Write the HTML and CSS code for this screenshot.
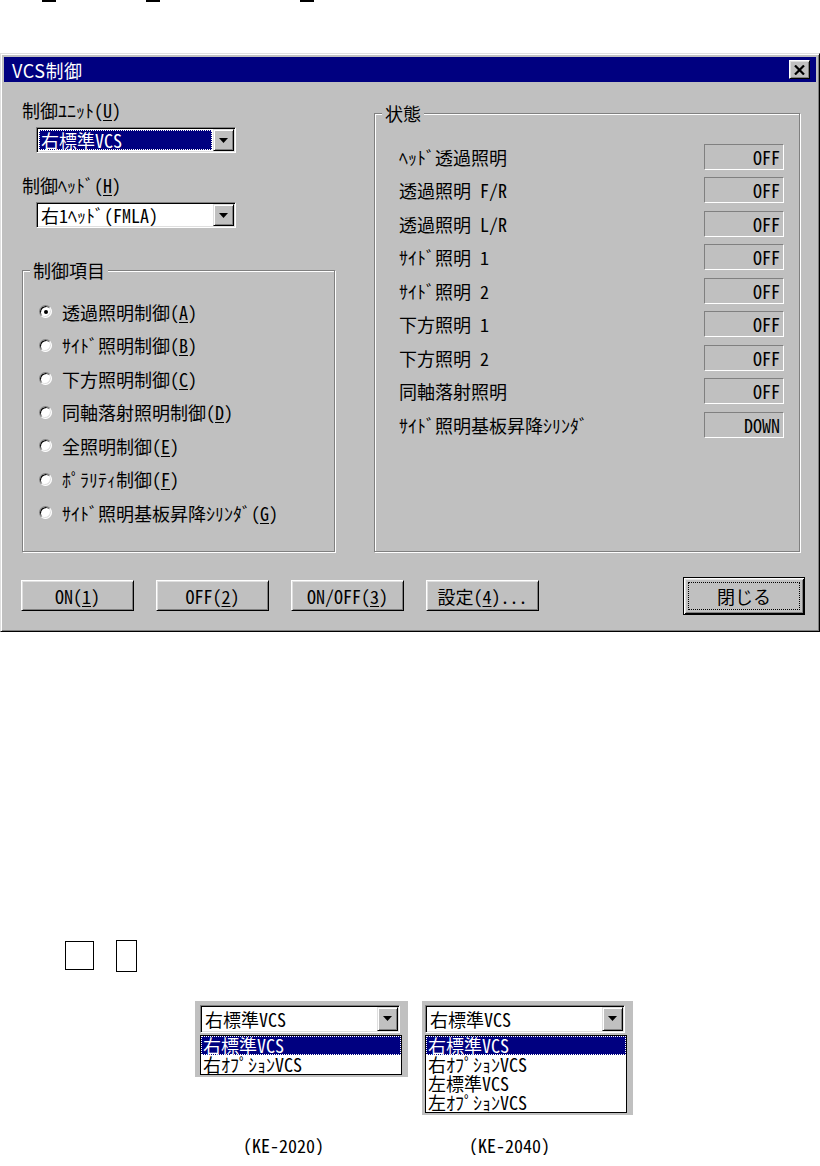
FILE: index.html
```html
<!DOCTYPE html>
<html lang="ja">
<head>
  <meta charset="UTF-8">
  <title>VCS制御</title>
  <link rel="stylesheet" href="styles.css">
</head>
<body>
  <div class="cutoff">
    <i class="mark"></i>
    <i class="mark mark-2"></i>
    <i class="mark mark-3"></i>
  </div>

  <div class="dialog">
    <div class="titlebar">
      <span class="title">VCS制御</span>
      <button class="close" title="閉じる">
        <svg width="11" height="10" viewBox="0 0 11 10"><path d="M1 0.5l9 9M10 0.5l-9 9" stroke="#000" stroke-width="2.2"/></svg>
      </button>
    </div>

    <div class="dlg-main">
      <div class="left-col">
        <label class="lbl">制御ﾕﾆｯﾄ(<u>U</u>)</label>
        <div class="combo">
          <span class="combo-text"><span class="sel">右標準VCS</span></span>
          <span class="drop"><svg width="9" height="5" viewBox="0 0 9 5"><path d="M0 0h9L4.5 5z"/></svg></span>
        </div>

        <label class="lbl">制御ﾍｯﾄﾞ(<u>H</u>)</label>
        <div class="combo">
          <span class="combo-text">右1ﾍｯﾄﾞ(FMLA)</span>
          <span class="drop"><svg width="9" height="5" viewBox="0 0 9 5"><path d="M0 0h9L4.5 5z"/></svg></span>
        </div>

        <fieldset class="group items">
          <legend>制御項目</legend>
          <div class="group-body">
            <div class="radio-row"><span class="radio checked"></span>透過照明制御(<u>A</u>)</div>
            <div class="radio-row"><span class="radio"></span>ｻｲﾄﾞ照明制御(<u>B</u>)</div>
            <div class="radio-row"><span class="radio"></span>下方照明制御(<u>C</u>)</div>
            <div class="radio-row"><span class="radio"></span>同軸落射照明制御(<u>D</u>)</div>
            <div class="radio-row"><span class="radio"></span>全照明制御(<u>E</u>)</div>
            <div class="radio-row"><span class="radio"></span>ﾎﾟﾗﾘﾃｨ制御(<u>F</u>)</div>
            <div class="radio-row"><span class="radio"></span>ｻｲﾄﾞ照明基板昇降ｼﾘﾝﾀﾞ(<u>G</u>)</div>
          </div>
        </fieldset>
      </div>

      <fieldset class="group status">
        <legend>状態</legend>
        <div class="group-body">
          <div class="stat-row"><span>ﾍｯﾄﾞ透過照明</span><span class="val">OFF</span></div>
          <div class="stat-row"><span>透過照明 F/R</span><span class="val">OFF</span></div>
          <div class="stat-row"><span>透過照明 L/R</span><span class="val">OFF</span></div>
          <div class="stat-row"><span>ｻｲﾄﾞ照明 1</span><span class="val">OFF</span></div>
          <div class="stat-row"><span>ｻｲﾄﾞ照明 2</span><span class="val">OFF</span></div>
          <div class="stat-row"><span>下方照明 1</span><span class="val">OFF</span></div>
          <div class="stat-row"><span>下方照明 2</span><span class="val">OFF</span></div>
          <div class="stat-row"><span>同軸落射照明</span><span class="val">OFF</span></div>
          <div class="stat-row"><span>ｻｲﾄﾞ照明基板昇降ｼﾘﾝﾀﾞ</span><span class="val">DOWN</span></div>
        </div>
      </fieldset>
    </div>

    <div class="btn-row">
      <button class="btn">ON(<u>1</u>)</button>
      <button class="btn">OFF(<u>2</u>)</button>
      <button class="btn">ON/OFF(<u>3</u>)</button>
      <button class="btn">設定(<u>4</u>)...</button>
      <button class="btn btn-default"><span class="focus">閉じる</span></button>
    </div>
  </div>

  <div class="boxes">
    <span class="box box-a"></span>
    <span class="box box-b"></span>
  </div>

  <div class="samples">
    <div class="panel panel-2020">
      <div class="combo combo-sample">
        <span class="combo-text">右標準VCS</span>
        <span class="drop"><svg width="9" height="5" viewBox="0 0 9 5"><path d="M0 0h9L4.5 5z"/></svg></span>
      </div>
      <ul class="list">
        <li class="on">右標準VCS</li>
        <li>右ｵﾌﾟｼｮﾝVCS</li>
      </ul>
    </div>
    <div class="panel panel-2040">
      <div class="combo combo-sample">
        <span class="combo-text">右標準VCS</span>
        <span class="drop"><svg width="9" height="5" viewBox="0 0 9 5"><path d="M0 0h9L4.5 5z"/></svg></span>
      </div>
      <ul class="list">
        <li class="on">右標準VCS</li>
        <li>右ｵﾌﾟｼｮﾝVCS</li>
        <li>左標準VCS</li>
        <li>左ｵﾌﾟｼｮﾝVCS</li>
      </ul>
    </div>
    <div class="caption cap-2020">(KE-2020)</div>
    <div class="caption cap-2040">(KE-2040)</div>
  </div>
</body>
</html>
```

FILE: styles.css
```css
body {
  margin: 0;
  width: 820px;
  background: #fff;
  color: #000;
  font-family: "Noto Sans CJK JP", sans-serif;
  font-size: 18px;
  line-height: 20px;
  font-feature-settings: "hwid" 1;
}
u {
  text-decoration-thickness: 1px;
  text-underline-offset: 2px;
}

/* cut off text line above the dialog */
.cutoff {
  display: flex;
  height: 2px;
  padding-left: 42px;
}
.mark {
  width: 14px;
  height: 2px;
  background: #000;
}
.mark-2 {
  margin-left: 90px;
}
.mark-3 {
  margin-left: 140px;
}

/* window */
.dialog {
  margin-top: 51px;
  width: 820px;
  box-sizing: border-box;
  padding: 3px;
  background: #c0c0c0;
  border: 1px solid;
  border-color: #dfdfdf #000 #000 #dfdfdf;
  box-shadow: inset 1px 1px #fff, inset -1px -1px #808080;
}
.titlebar {
  display: flex;
  align-items: center;
  justify-content: space-between;
  height: 25px;
  padding: 0 6px 0 8px;
  background: #000080;
  color: #fff;
}
.title {
  font-feature-settings: normal;
  letter-spacing: 0.5px;
}
.close {
  display: flex;
  align-items: center;
  justify-content: center;
  width: 21px;
  height: 19px;
  padding: 0;
  background: #c0c0c0;
  border: 1px solid;
  border-color: #fff #000 #000 #fff;
  box-shadow: inset 1px 1px #dfdfdf, inset -1px -1px #808080;
}

.dlg-main {
  display: flex;
  padding: 18px 0 0 18px;
}
.left-col {
  width: 313px;
}
.lbl {
  display: block;
  height: 20px;
}

/* combo box */
.combo {
  display: flex;
  box-sizing: border-box;
  width: 200px;
  height: 26px;
  margin: 7px 0 22px 14px;
  background: #fff;
  border: 1px solid;
  border-color: #808080 #fff #fff #808080;
  box-shadow: inset 1px 1px #000, inset -1px -1px #dfdfdf;
  padding: 1px;
}
.combo-text {
  flex: 1;
  display: flex;
  align-items: center;
  padding: 1px 1px 1px 3px;
  line-height: 20px;
  white-space: nowrap;
}
.combo .sel {
  flex: 1;
  margin-left: -2px;
  padding-left: 1px;
  background: #000080;
  color: #fff;
  border: 1px dotted #fff;
  line-height: 18px;
}
.drop {
  display: flex;
  align-items: center;
  justify-content: center;
  box-sizing: border-box;
  width: 21px;
  background: #c0c0c0;
  border: 1px solid;
  border-color: #dfdfdf #000 #000 #dfdfdf;
  box-shadow: inset 1px 1px #fff, inset -1px -1px #808080;
}

/* group boxes */
.group {
  margin: 0;
  padding: 0;
  min-width: 0;
  border: 1px solid #808080;
  box-shadow: inset 1px 1px #fff, 1px 1px #fff;
}
.group legend {
  margin-left: 7px;
  padding: 0 3px;
  background: #c0c0c0;
  line-height: 20px;
}
.items {
  margin-top: 32px;
}
.items .group-body {
  padding: 15px 0 21px 16px;
}
.radio-row {
  display: flex;
  align-items: center;
  height: 33.5px;
  white-space: nowrap;
}
.radio {
  display: flex;
  align-items: center;
  justify-content: center;
  box-sizing: border-box;
  width: 13px;
  height: 13px;
  margin-right: 10px;
  border-radius: 50%;
  background: #fff;
  border: 1px solid;
  border-color: #808080 #fff #fff #808080;
  box-shadow: inset 1px 1px #000, inset -1px -1px #dfdfdf;
}
.radio.checked::after {
  content: "";
  width: 4px;
  height: 4px;
  border-radius: 50%;
  background: #000;
}

.status {
  width: 426px;
  box-sizing: border-box;
  margin-left: 39px;
  margin-top: 3px;
}
.status .group-body {
  padding: 17px 15px 0 24px;
}
.stat-row {
  display: flex;
  align-items: center;
  justify-content: space-between;
  height: 33.5px;
  white-space: nowrap;
}
.val {
  box-sizing: border-box;
  width: 80px;
  height: 26px;
  padding-right: 3px;
  text-align: right;
  line-height: 24px;
  border: 1px solid;
  border-color: #808080 #fff #fff #808080;
}

/* buttons */
.btn-row {
  display: flex;
  align-items: center;
  gap: 22px;
  margin: 25px 0 13px;
  padding: 0 11px 0 17px;
}
.btn {
  box-sizing: border-box;
  width: 113px;
  height: 31px;
  padding: 0;
  background: #c0c0c0;
  color: #000;
  font: inherit;
  font-feature-settings: inherit;
  border: 1px solid;
  border-color: #fff #000 #000 #fff;
  box-shadow: inset 1px 1px #dfdfdf, inset -1px -1px #808080;
}
.btn-default {
  display: flex;
  width: 122px;
  height: 38px;
  margin-left: auto;
  padding: 4px;
  border-color: #000;
  box-shadow: inset 1px 1px #fff, inset -1px -1px #000, inset 2px 2px #dfdfdf, inset -2px -2px #808080;
  font-feature-settings: normal;
}
.focus {
  flex: 1;
  display: flex;
  align-items: center;
  justify-content: center;
  border: 1px dotted #000;
}

/* figure below the dialog */
.boxes {
  display: flex;
  align-items: center;
  height: 32px;
  margin-top: 308px;
  padding-left: 65px;
}
.box {
  box-sizing: border-box;
  border: 1px solid #000;
}
.box-a {
  width: 29px;
  height: 29px;
}
.box-b {
  width: 21px;
  height: 32px;
  margin-left: 22px;
}

.samples {
  display: grid;
  grid-template-columns: 213px 211px;
  column-gap: 14px;
  row-gap: 20px;
  align-items: start;
  margin-top: 29px;
  padding-left: 195px;
}
.panel {
  background: #c0c0c0;
  padding: 4px 6px 2px 5px;
}
.panel-2040 {
  padding-left: 3px;
}
.combo-sample {
  margin: 0;
  height: 28px;
}
.list {
  list-style: none;
  margin: 2px 0 0;
  padding: 0;
  background: #fff;
  border: 1px solid #000;
}
.list li {
  height: 19px;
  line-height: 19px;
  padding-left: 2px;
  white-space: nowrap;
}
.list li.on {
  background: #000080;
  color: #fff;
  outline: 1px dotted #fff;
  outline-offset: -1px;
}
.caption {
  line-height: 20px;
}
.cap-2020 {
  padding-left: 48px;
}
.cap-2040 {
  padding-left: 47px;
}
```
